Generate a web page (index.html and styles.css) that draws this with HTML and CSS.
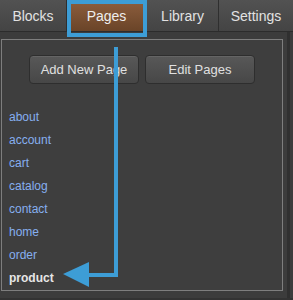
FILE: index.html
```html
<!DOCTYPE html>
<html>
<head>
    <meta charset="utf-8">
    <title>Pages</title>
    <link rel="stylesheet" href="styles.css">
</head>
<body>
    <div class="tabs">
        <div class="tab tab-blocks">Blocks</div>
        <div class="tab tab-pages active">Pages</div>
        <div class="tab tab-library">Library</div>
        <div class="tab tab-settings">Settings</div>
    </div>

    <div class="panel">
        <div class="page-box">
            <div class="actions">
                <button class="btn">Add New Page</button>
                <button class="btn">Edit Pages</button>
            </div>
            <ul class="page-list">
                <li><a href="#">about</a></li>
                <li><a href="#">account</a></li>
                <li><a href="#">cart</a></li>
                <li><a href="#">catalog</a></li>
                <li><a href="#">contact</a></li>
                <li><a href="#">home</a></li>
                <li><a href="#">order</a></li>
                <li class="current">product</li>
            </ul>
        </div>
        <div class="scroll-track"></div>
    </div>

    <!-- annotation: highlight + arrow -->
    <svg class="annotation" width="293" height="300" viewBox="0 0 293 300">
        <rect x="69" y="2" width="76" height="33" fill="none" stroke="#3d9dd6" stroke-width="4"/>
        <polyline points="116,47 116,275 88,275" fill="none" stroke="#3d9dd6" stroke-width="4"/>
        <polygon points="63,274 89,262 89,287" fill="#3d9dd6"/>
    </svg>
</body>
</html>
```

FILE: styles.css
```css
body {
    margin: 0;
    width: 293px;
    height: 300px;
    overflow: hidden;
    background: #333;
    font-family: 'Liberation Sans', Arial, sans-serif;
    position: relative;
}
.tabs {
    display: flex;
    height: 32px;
    background: linear-gradient(#525252, #444);
    border-bottom: 1px solid #2c2c2c;
    box-sizing: border-box;
}
.tab {
    display: flex;
    align-items: center;
    justify-content: center;
    padding-top: 1px;
    font-size: 14px;
    color: #e2e2e2;
    border-right: 1px solid #2f2f2f;
    box-sizing: border-box;
}
.tab-blocks { width: 67px; }
.tab-pages { width: 80px; }
.tab-library { width: 72px; }
.tab-settings { width: 74px; border-right: none; }
.tab.active {
    background: linear-gradient(#8e5f3e, #6a4428);
    color: #eee;
}
.panel {
    display: flex;
    height: 259px;
    padding: 7px 0 0 1px;
    background: #3c3c3c;
}
.page-box {
    width: 282px;
    height: 252px;
    border: 1px solid #7e7e7e;
    box-sizing: border-box;
    background: #3e3e3e;
}
.scroll-track {
    width: 3px;
    margin-left: 4px;
    margin-top: -7px;
    background: #303030;
}
.actions {
    display: flex;
    justify-content: center;
    gap: 6px;
    margin-top: 15px;
}
.btn {
    width: 110px;
    height: 29px;
    padding: 0;
    border: 1px solid #2e2e2e;
    border-radius: 4px;
    background: linear-gradient(#585858, #474747);
    color: #e0e0e0;
    font-family: 'Liberation Sans', Arial, sans-serif;
    font-size: 13px;
    box-shadow: inset 0 1px 0 rgba(255,255,255,0.08);
}
.page-list {
    list-style: none;
    margin: 22px 0 0 0;
    padding: 0 0 0 7px;
}
.page-list li {
    font-size: 12px;
    line-height: 23px;
}
.page-list a {
    color: #86aff0;
    text-decoration: none;
}
.page-list li.current {
    color: #e6e6e6;
    font-weight: bold;
}
.annotation {
    position: absolute;
    left: 0;
    top: 0;
}
```
